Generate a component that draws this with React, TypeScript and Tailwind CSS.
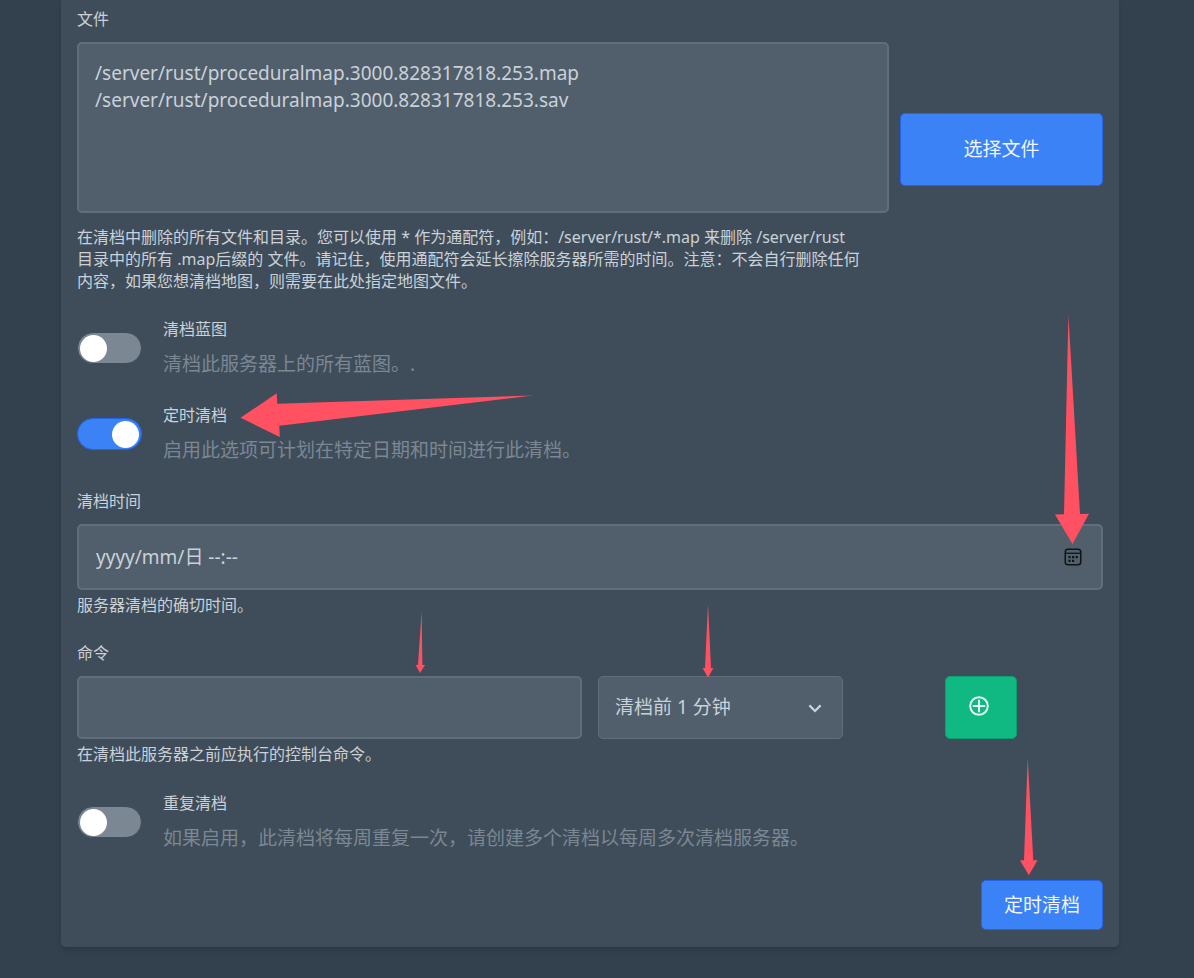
import { useState, type ReactNode } from "react";

const fieldClass =
  "block w-full rounded-[5px] border-2 border-[#606d7b] bg-[#515f6c] text-[#cad1d8] outline-none";

function FieldLabel({ htmlFor, children }: { htmlFor: string; children: ReactNode }) {
  return (
    <label htmlFor={htmlFor} className="mb-[11px] block text-[16px] leading-6 text-[#cad1d8]">
      {children}
    </label>
  );
}

function Help({ children }: { children: ReactNode }) {
  return <p className="mt-1 text-[16px] leading-[22px] text-[#cad1d8]">{children}</p>;
}

interface ToggleProps {
  id: string;
  label: string;
  description: string;
  initial?: boolean;
}

function ToggleRow({ id, label, description, initial = false }: ToggleProps) {
  const [on, setOn] = useState(initial);
  return (
    <div className="mt-[25px] flex items-center">
      <span className="relative flex h-8 w-[65px] shrink-0">
        <input
          id={id}
          type="checkbox"
          role="switch"
          checked={on}
          onChange={(e) => setOn(e.target.checked)}
          className="h-8 w-full cursor-pointer appearance-none rounded-full border border-[#3f4d5a] bg-[#7b8793] checked:border-[#2563eb] checked:bg-[#3b82f6]"
        />
        <span
          className={
            on
              ? "pointer-events-none absolute top-[3px] right-[3px] size-[27px] rounded-full bg-white"
              : "pointer-events-none absolute top-[3px] left-[3px] size-[27px] rounded-full bg-white"
          }
        />
      </span>
      <div className="ml-[21px]">
        <label htmlFor={id} className="block text-[16px] leading-6 text-[#cad1d8]">
          {label}
        </label>
        <p className="mt-[9px] text-[19px] leading-7 text-[#7b8793]">{description}</p>
      </div>
    </div>
  );
}

function CalendarIcon() {
  return (
    <svg width="18" height="18" viewBox="0 0 18 18" fill="none" aria-hidden="true">
      <rect x="1.25" y="1.25" width="15.5" height="15.5" rx="2.75" stroke="#111417" strokeWidth="1.5" />
      <path d="M1.5 5.25h15" stroke="#111417" strokeWidth="1.3" />
      <g fill="#111417">
        <rect x="4.4" y="8" width="2.2" height="2.2" />
        <rect x="8" y="8" width="2.2" height="2.2" />
        <rect x="11.6" y="8" width="2.2" height="2.2" />
        <rect x="4.4" y="11.8" width="2.2" height="2.2" />
        <rect x="8" y="11.8" width="2.2" height="2.2" />
      </g>
    </svg>
  );
}

function Arrows() {
  return (
    <svg
      className="pointer-events-none absolute top-0 left-0"
      width="1194"
      height="978"
      viewBox="0 0 1194 978"
      fill="#ff5162"
      aria-hidden="true"
    >
      <path d="M240.5 417.8 276.7 393.3 277.3 403.8 533 395.5 279.3 425.7 279.8 437Z" />
      <path d="M1068.4 315 1080 514 1089 513.7 1072.5 544 1055 514.5 1064 514.2Z" />
      <path d="M421.6 611 422.4 665 425 665 420 673 415.6 665 418 665Z" />
      <path d="M708 604 711 668 713.4 668 708 677.4 702.6 668 705 668Z" />
      <path d="M1027.7 758 1033.3 860.3 1037.5 860.3 1028.8 875.3 1020 860.3 1024 860.3Z" />
    </svg>
  );
}

export default function App() {
  return (
    <div className="relative min-h-screen bg-[#33404d] pr-[75px] pb-[31px] pl-[61px] font-['Noto_Sans','Noto_Sans_CJK_SC',sans-serif]">
      <form
        onSubmit={(e) => e.preventDefault()}
        className="rounded-b-[5px] bg-[#3f4d5a] px-4 pt-[7px] pb-[17px] shadow-md"
      >
        <div className="grid grid-cols-[4fr_1fr] items-center gap-[11px]">
          <div>
            <FieldLabel htmlFor="files">文件</FieldLabel>
            <textarea
              id="files"
              spellCheck={false}
              className={`${fieldClass} h-[171px] resize-none px-4 py-4 text-[19px] leading-[27px]`}
              defaultValue={
                "/server/rust/proceduralmap.3000.828317818.253.map\n/server/rust/proceduralmap.3000.828317818.253.sav"
              }
            />
            <p className="mt-[13px] text-[16px] leading-[22px] text-[#cad1d8]">
              在清档中删除的所有文件和目录。您可以使用 * 作为通配符，例如：/server/rust/*.map 来删除 /server/rust
              <br />
              目录中的所有 .map后缀的 文件。请记住，使用通配符会延长擦除服务器所需的时间。注意：不会自行删除任何
              <br />
              内容，如果您想清档地图，则需要在此处指定地图文件。
            </p>
          </div>
          <button
            type="button"
            className="h-[73px] w-full cursor-pointer rounded-[5px] border border-[#2563eb] bg-[#3b82f6] text-[19px] text-[#eff6ff]"
          >
            选择文件
          </button>
        </div>

        <ToggleRow id="blueprints" label="清档蓝图" description="清档此服务器上的所有蓝图。." />
        <ToggleRow
          id="scheduled"
          label="定时清档"
          description="启用此选项可计划在特定日期和时间进行此清档。"
          initial
        />

        <div className="mt-[25px]">
          <FieldLabel htmlFor="time">清档时间</FieldLabel>
          <div className="relative">
            <input
              id="time"
              type="text"
              defaultValue="yyyy/mm/日 --:--"
              className={`${fieldClass} h-[66px] px-[17px] pb-[3px] text-[19px]`}
            />
            <button
              type="button"
              aria-label="选择日期"
              className="absolute inset-y-0 right-[21px] flex cursor-pointer items-center"
            >
              <CalendarIcon />
            </button>
          </div>
          <Help>服务器清档的确切时间。</Help>
        </div>

        <div className="mt-[25px] grid grid-cols-4 gap-x-4">
          <div className="col-span-2">
            <FieldLabel htmlFor="command">命令</FieldLabel>
            <input id="command" type="text" className={`${fieldClass} h-[63px] px-4 text-[19px]`} />
          </div>
          <div className="relative self-end">
            <select
              aria-label="执行时间"
              className="block h-[63px] w-full cursor-pointer appearance-none rounded-[5px] border border-[#606d7b] bg-[#515f6c] px-4 text-[19px] text-[#cad1d8] outline-none"
            >
              <option>清档前 1 分钟</option>
            </select>
            <svg
              className="pointer-events-none absolute top-7 right-[21px]"
              width="14"
              height="9"
              viewBox="0 0 14 9"
              fill="none"
              stroke="#cad1d8"
              strokeWidth="2.2"
              aria-hidden="true"
            >
              <path d="M1.4 1.4 7 7l5.6-5.6" />
            </svg>
          </div>
          <button
            type="button"
            aria-label="添加命令"
            className="flex h-[63px] w-[72px] cursor-pointer items-center justify-center self-end justify-self-center rounded-[5px] border border-[#0e9f6e] bg-[#10b981] pr-1 pb-1 text-[#ecfdf5]"
          >
            <svg width="20" height="20" viewBox="0 0 20 20" fill="none" stroke="currentColor" strokeWidth="1.9" aria-hidden="true">
              <circle cx="10" cy="10" r="8.8" />
              <path d="M10 3.8v12.4M3.8 10h12.4" />
            </svg>
          </button>
        </div>
        <Help>在清档此服务器之前应执行的控制台命令。</Help>

        <div className="pt-px">
          <ToggleRow
            id="repeat"
            label="重复清档"
            description="如果启用，此清档将每周重复一次，请创建多个清档以每周多次清档服务器。"
          />
        </div>

        <div className="mt-7 flex justify-end">
          <button
            type="submit"
            className="h-[50px] cursor-pointer rounded-[5px] border border-[#2563eb] bg-[#3b82f6] px-[22px] text-[19px] text-[#eff6ff]"
          >
            定时清档
          </button>
        </div>
      </form>
      <Arrows />
    </div>
  );
}
